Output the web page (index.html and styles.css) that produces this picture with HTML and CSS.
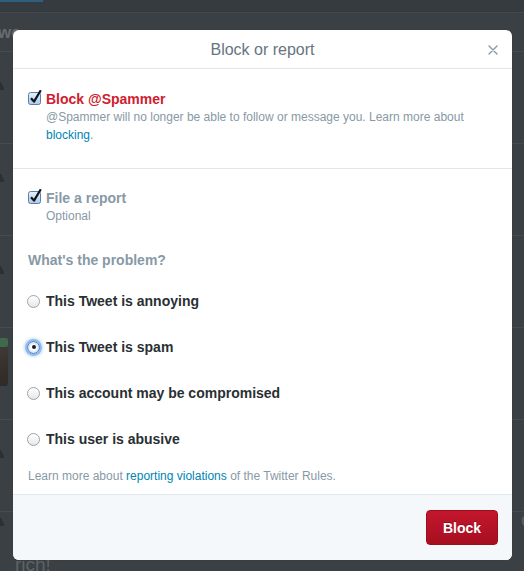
FILE: index.html
```html
<!DOCTYPE html>
<html lang="en">
<head>
<meta charset="utf-8">
<title>Block or report</title>
<link rel="stylesheet" href="styles.css">
</head>
<body>
<div class="page">
  <div class="topbar"><span class="topbar-accent"></span></div>
  <div class="stream">
    <div class="stream-head"><span class="head-text">we</span></div>
    <div class="item"><span class="avatar"></span></div>
    <div class="item"><span class="avatar"></span></div>
    <div class="item"><span class="avatar"></span></div>
    <div class="item item-media"><span class="avatar avatar-photo"><span class="badge-green"></span></span></div>
    <div class="item"><span class="avatar"></span></div>
    <div class="item item-last">
      <span class="avatar avatar-last"></span>
      <div class="tweet-text">
        <div class="tl"><span class="tl-end">or</span></div>
        <div class="tl"><span class="tl-end">g</span></div>
        <div class="tl tl-start">rich!</div>
      </div>
    </div>
  </div>
</div>

<div class="modal" role="dialog" aria-labelledby="modal-title">
  <div class="modal-header">
    <span></span>
    <h3 class="modal-title" id="modal-title">Block or report</h3>
    <button class="modal-close" aria-label="Close">
      <svg width="10" height="10" viewBox="0 0 10 10"><path d="M1 1 L9 9 M9 1 L1 9" stroke="#8899a6" stroke-width="1.4" fill="none" stroke-linecap="round"/></svg>
    </button>
  </div>

  <div class="section section-block">
    <div class="check-row">
      <span class="checkbox">
        <svg width="16" height="17" viewBox="0 0 16 17">
          <defs>
            <linearGradient id="cbg" x1="0" y1="0" x2="0" y2="1">
              <stop offset="0" stop-color="#e9f1fb"/>
              <stop offset="1" stop-color="#aac8ec"/>
            </linearGradient>
          </defs>
          <rect x="0.5" y="3.5" width="12" height="12" rx="2" fill="url(#cbg)" stroke="#5d7ea7"/>
          <path d="M3 9.2 L6 12.6 L12.8 1.2" stroke="#101418" stroke-width="2.2" fill="none" stroke-linejoin="round"/>
        </svg>
      </span>
      <div class="check-body">
        <div class="check-label label-red">Block @Spammer</div>
        <p class="check-desc">@Spammer will no longer be able to follow or message you. Learn more about <a href="#" class="link">blocking</a>.</p>
      </div>
    </div>
  </div>

  <div class="section section-report">
    <div class="check-row">
      <span class="checkbox">
        <svg width="16" height="17" viewBox="0 0 16 17">
          <rect x="0.5" y="3.5" width="12" height="12" rx="2" fill="url(#cbg)" stroke="#5d7ea7"/>
          <path d="M3 9.2 L6 12.6 L12.8 1.2" stroke="#101418" stroke-width="2.2" fill="none" stroke-linejoin="round"/>
        </svg>
      </span>
      <div class="check-body">
        <div class="check-label label-gray">File a report</div>
        <p class="check-desc">Optional</p>
      </div>
    </div>

    <h4 class="problem-title">What's the problem?</h4>

    <ul class="radio-list">
      <li class="radio-row"><span class="radio"></span><span class="radio-label">This Tweet is annoying</span></li>
      <li class="radio-row"><span class="radio radio-on"><span class="radio-dot"></span></span><span class="radio-label">This Tweet is spam</span></li>
      <li class="radio-row"><span class="radio"></span><span class="radio-label">This account may be compromised</span></li>
      <li class="radio-row"><span class="radio"></span><span class="radio-label">This user is abusive</span></li>
    </ul>

    <p class="rules-note">Learn more about <a href="#" class="link">reporting violations</a> of the Twitter Rules.</p>
  </div>

  <div class="modal-footer">
    <button class="btn-block">Block</button>
  </div>
</div>
</body>
</html>
```

FILE: styles.css
```css
* { box-sizing: border-box; }

html, body {
  margin: 0;
  padding: 0;
  width: 524px;
  height: 571px;
  overflow: hidden;
  background: #3b4044;
  font-family: "Liberation Sans", Arial, Helvetica, sans-serif;
}

/* ---------- dimmed page behind the dialog ---------- */
.page {
  width: 524px;
  height: 571px;
  overflow: hidden;
  background: #3b4044;
}

.topbar {
  height: 13px;
  background: #363b3f;
  border-bottom: 1px solid #44494d;
  display: flex;
}

.topbar-accent {
  width: 43px;
  height: 2px;
  background: #2f5f80;
}

.stream-head {
  height: 39px;
  border-bottom: 1px solid #464b4f;
  display: flex;
  align-items: center;
  overflow: hidden;
  padding-top: 2px;
}

.head-text {
  margin-left: -2px;
  font-size: 17px;
  font-weight: bold;
  color: #676c70;
}

.item {
  height: 92px;
  border-bottom: 1px solid #464b4f;
  display: flex;
  align-items: flex-start;
  padding-top: 10px;
}

.avatar {
  width: 32px;
  height: 28px;
  margin-left: -24px;
  background:
    radial-gradient(circle at 50% 30%, #2c3034 0 6px, transparent 6.5px),
    radial-gradient(ellipse 12px 11px at 50% 100%, #2c3034 0 100%, transparent 100%);
  flex: none;
}

.item-media .avatar-photo {
  margin-top: 0;
  height: 48px;
  width: 40px;
  margin-left: -32px;
  border-radius: 3px;
  position: relative;
  background: linear-gradient(160deg, #4a4540, #38322e 60%, #2e2a27);
}

.badge-green {
  position: absolute;
  right: 0;
  top: 0;
  width: 9px;
  height: 9px;
  border-radius: 2px;
  background: #3e6a4b;
}

.item-last {
  border-bottom: none;
  padding-top: 0;
}

.avatar-last {
  margin-top: -14px;
}

.tweet-text {
  margin-left: 7px;
  margin-top: -3px;
  flex: 1;
  font-size: 19px;
  color: #5d6266;
  line-height: 22px;
}

.tl {
  display: flex;
  justify-content: flex-end;
  margin-right: -14px;
  height: 22px;
}

.tl-start {
  justify-content: flex-start;
  margin-right: 0;
  padding-top: 1px;
}

/* ---------- dialog ---------- */
.modal {
  position: absolute;
  left: 13px;
  top: 30px;
  width: 499px;
  height: 530px;
  background: #fff;
  border-radius: 6px;
  overflow: hidden;
  display: flex;
  flex-direction: column;
  box-shadow: 0 0 1px rgba(0,0,0,0.3);
}

.modal-header {
  height: 39px;
  border-bottom: 1px solid #e1e8ed;
  display: grid;
  grid-template-columns: 1fr auto 1fr;
  align-items: center;
}

.modal-title {
  margin: 0;
  padding-top: 2px;
  font-size: 16px;
  font-weight: normal;
  color: #66757f;
  line-height: 36px;
}

.modal-close {
  justify-self: end;
  margin-right: 14px;
  margin-top: 1px;
  padding: 0;
  border: 0;
  background: none;
  width: 10px;
  height: 10px;
  display: flex;
}

.section {
  padding: 0 15px;
}

.section-block {
  padding-top: 21px;
  padding-bottom: 24px;
  border-bottom: 1px solid #e1e8ed;
}

.section-report {
  padding-top: 20px;
  padding-bottom: 9px;
  border-bottom: 1px solid #e1e8ed;
}

.check-row {
  display: flex;
  align-items: flex-start;
}

.checkbox {
  width: 18px;
  flex: none;
  display: flex;
  margin-top: -1px;
}

.check-body {
  flex: 1;
}

.check-label {
  font-size: 14px;
  font-weight: bold;
  line-height: 18px;
}

.label-red { color: #d0202f; }
.label-gray { color: #8899a6; }

.check-desc {
  margin: 0;
  font-size: 12px;
  line-height: 18px;
  color: #8899a6;
  padding-right: 20px;
}

.link {
  color: #0084b4;
  text-decoration: none;
}

.problem-title {
  margin: 26px 0 0;
  font-size: 14px;
  font-weight: bold;
  line-height: 18px;
  color: #8899a6;
}

.radio-list {
  list-style: none;
  margin: 23px 0 0;
  padding: 0;
  display: flex;
  flex-direction: column;
  gap: 28px;
}

.radio-row {
  display: flex;
  align-items: center;
  height: 18px;
}

.radio {
  width: 13px;
  height: 13px;
  margin-left: -1px;
  margin-right: 6px;
  border-radius: 50%;
  border: 1px solid #9ea3a8;
  background: linear-gradient(#ffffff, #e6e7e9);
  box-shadow: inset 0 1px 1px rgba(255,255,255,0.9);
  display: flex;
  align-items: center;
  justify-content: center;
  flex: none;
}

.radio-on {
  border-color: #4a82c9;
  background: radial-gradient(circle, #ffffff 0 35%, #c9ddf4 70%, #9fc1ea 100%);
  box-shadow: 0 0 0 2px rgba(96,156,230,0.55), 0 0 3px 3px rgba(96,156,230,0.35);
}

.radio-dot {
  width: 4px;
  height: 4px;
  border-radius: 50%;
  background: #1a1f24;
}

.radio-label {
  font-size: 14px;
  font-weight: bold;
  color: #292f33;
  line-height: 18px;
}

.rules-note {
  margin: 19px 0 0;
  font-size: 12px;
  line-height: 18px;
  color: #8899a6;
}

.modal-footer {
  flex: 1;
  background: #f5f8fa;
  display: flex;
  justify-content: flex-end;
  align-items: flex-start;
  padding: 15px 14px 0 0;
}

.btn-block {
  width: 72px;
  height: 35px;
  border-radius: 4px;
  border: 1px solid #9e0d1c;
  background: linear-gradient(#c4172e, #a60f20);
  color: #fff;
  font-family: "Liberation Sans", Arial, sans-serif;
  font-size: 14px;
  font-weight: bold;
  padding: 0;
  text-shadow: 0 -1px 0 rgba(0,0,0,0.25);
}
```
